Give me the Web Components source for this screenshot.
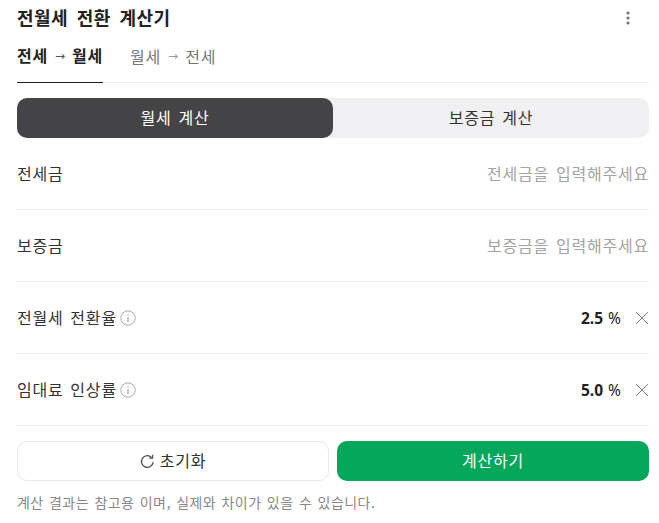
<!DOCTYPE html>
<html lang="ko"><head><meta charset="utf-8">
<style>
html,body{margin:0;padding:0;background:#fff}
body{font-family:"Noto Sans CJK KR","Noto Sans",sans-serif;color:#222}
</style></head><body>
<calc-app>
<calc-header>전월세 전환 계산기</calc-header>
<calc-tabs></calc-tabs>
<calc-seg></calc-seg>
<calc-row label="전세금" placeholder="전세금을 입력해주세요"></calc-row>
<calc-row label="보증금" placeholder="보증금을 입력해주세요"></calc-row>
<calc-row label="전월세 전환율" info value="2.5"></calc-row>
<calc-row label="임대료 인상률" info value="5.0"></calc-row>
<calc-actions></calc-actions>
<calc-note>계산 결과는 참고용 이며, 실제와 차이가 있을 수 있습니다.</calc-note>
</calc-app>
<script>
function def(name,html){
  customElements.define(name,class extends HTMLElement{
    constructor(){super();this.attachShadow({mode:'open'});}
    connectedCallback(){this.shadowRoot.innerHTML=typeof html==='function'?html(this):html;}
  });
}
const ko='font-size:16px;letter-spacing:.8px;word-spacing:1.5px;';
def('calc-app',`<style>:host{display:flex;flex-direction:column;width:632px;padding:0 10px 0 17px;height:523px;overflow:hidden}</style><slot></slot>`);
def('calc-header',`<style>:host{display:flex;justify-content:space-between;align-items:center;height:36px;font-size:18px;letter-spacing:.5px;word-spacing:3px;font-weight:700;color:#222}
span{display:block;padding-bottom:3px}
svg{display:block;margin-right:13px}</style><span><slot></slot></span><svg width="16" height="16" viewBox="0 0 16 16" fill="#777"><circle cx="8" cy="3" r="1.6"/><circle cx="8" cy="8" r="1.6"/><circle cx="8" cy="13" r="1.6"/></svg>`);
def('calc-tabs',`<style>:host{display:flex;gap:27px;height:47px;box-sizing:border-box;border-bottom:1px solid #eee;${ko}}
.t{box-sizing:border-box;height:47px;display:flex;align-items:center;padding-bottom:8px;color:#777}
.on{color:#222;font-weight:700;border-bottom:1px solid #222}
.a{font-weight:400;color:#555;width:24px;text-align:center;letter-spacing:0;font-size:12px;font-family:"Noto Sans","DejaVu Sans",sans-serif}
.off .a{color:#999}</style>
<div class="t on">전세<span class="a">→</span>월세</div><div class="t off">월세<span class="a">→</span>전세</div>`);
def('calc-seg',`<style>:host{display:flex;height:40px;margin-top:15px;background:#f0f0f2;border-radius:10px;${ko}}
div{flex:1;display:flex;align-items:center;justify-content:center;border-radius:10px;color:#333;box-sizing:border-box;padding-bottom:2px}
.on{background:#444446;color:#fff}</style><div class="on">월세 계산</div><div>보증금 계산</div>`);
def('calc-row',e=>{
  const l=e.getAttribute('label'),p=e.getAttribute('placeholder'),v=e.getAttribute('value');
  const info=e.hasAttribute('info')?`<svg width="16" height="16" viewBox="0 0 16 16" fill="none" stroke="#aaa"><circle cx="8" cy="8" r="7.2"/><path d="M8 7v5M8 4v1.5" stroke-width="1.2"/></svg>`:'';
  const right=v?`<span class="v"><b>${v}</b> %</span><svg class="x" width="14" height="14" viewBox="0 0 14 14" stroke="#888" fill="none"><path d="M1 1l12 12M13 1L1 13"/></svg>`:`<span class="p">${p}</span>`;
  return `<style>:host{display:flex;align-items:center;justify-content:space-between;height:72px;box-sizing:border-box;border-bottom:1px solid #eee;${ko}color:#333}
  .l{display:flex;align-items:center;gap:3px}.r{display:flex;align-items:center}
  .l span,.p{padding-bottom:2px}
  .p{color:#a3a3a3}.v{color:#222;font-size:15.5px;font-family:"Noto Sans",sans-serif;letter-spacing:0;word-spacing:1px}b{font-weight:700}.x{margin-left:14px}</style>
  <div class="l"><span>${l}</span>${info}</div><div class="r">${right}</div>`;
});
def('calc-actions',`<style>:host{display:grid;grid-template-columns:1fr 1fr;gap:8px;margin-top:15px;height:40px;${ko}}
div{display:flex;align-items:center;justify-content:center;gap:5px;box-sizing:border-box;border-radius:10px}
span{padding-bottom:2px}
.a{border:1px solid #e8e8e8;color:#333}.b{background:#05a85a;color:#fff}</style>
<div class="a"><svg width="15" height="15" viewBox="0 0 15 15" fill="none" stroke="#555" stroke-width="1.4"><path d="M13.2 8.2A5.9 5.9 0 1 1 11.6 3.4"/><path d="M12.6 .8v3.4H9.2" stroke-width="1.3"/></svg><span>초기화</span></div><div class="b"><span>계산하기</span></div>`);
def('calc-note',`<style>:host{display:block;margin-top:11px;font-size:14px;letter-spacing:.45px;word-spacing:1px;color:#888;line-height:20px}</style><slot></slot>`);
</script>
</body></html>
